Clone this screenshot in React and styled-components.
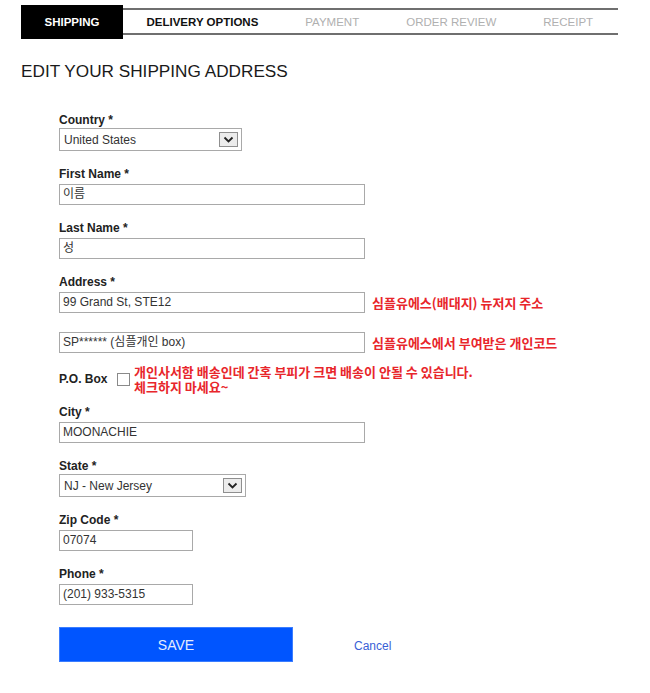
import styled, { createGlobalStyle } from 'styled-components';

const GlobalStyle = createGlobalStyle`
    body {
        margin: 0;
        background: #fff;
        font-family: "Liberation Sans", Arial, "Noto Sans CJK KR", sans-serif;
        color: #222;
    }
`;

const Page = styled.div`
    padding: 0 32px 40px 21px;
`;

const TabBar = styled.div`
    display: flex;
    width: 597px;
    height: 23px;
    margin-top: 8px;
    border-top: 2px solid #6f6f6f;
    border-bottom: 2px solid #6f6f6f;
`;

const Tab = styled.div`
    display: flex;
    align-items: center;
    justify-content: center;
    padding: 0 23.5px;
    font-size: 11.5px;
    font-weight: ${(p) => (p.$state === 'todo' ? 'normal' : 'bold')};
    color: ${(p) =>
        p.$state === 'active' ? '#fff' : p.$state === 'todo' ? '#b0b0b0' : '#111'};
    background: ${(p) => (p.$state === 'active' ? '#000' : 'transparent')};
    margin: ${(p) => (p.$state === 'active' ? '-5px 0 -6px' : '0')};
    white-space: nowrap;
`;

const Heading = styled.h1`
    margin: 26px 0 0;
    font-size: 17.2px;
    line-height: 20px;
    font-weight: normal;
    color: #1a1a1a;
`;

const Form = styled.div`
    padding: 32px 0 0 38px;
`;

const Group = styled.div`
    margin-bottom: ${(p) => (p.$gap === undefined ? 16 : p.$gap)}px;
`;

const Label = styled.div`
    font-size: 12px;
    line-height: 14px;
    font-weight: bold;
    color: #222;
    margin-bottom: 3px;
`;

const Row = styled.div`
    display: flex;
    align-items: center;
    gap: 7px;
`;

const Input = styled.div`
    box-sizing: border-box;
    width: ${(p) => p.$w}px;
    height: 21px;
    border: 1px solid #a9a9a9;
    padding: 0 3px;
    font-size: 12px;
    line-height: 19px;
    color: #333;
    font-family: "Liberation Sans", Arial, "Noto Sans CJK KR", sans-serif;
    white-space: nowrap;
`;

const Select = styled.div`
    box-sizing: border-box;
    display: flex;
    align-items: center;
    width: ${(p) => p.$w}px;
    height: 23px;
    margin-top: -2px;
    border: 1px solid #a9a9a9;
    padding: 0 3px 0 4px;
    font-size: 12px;
    color: #333;
`;

const SelectText = styled.span`
    flex: 1;
`;

const ArrowBox = styled.span`
    box-sizing: border-box;
    display: flex;
    align-items: center;
    justify-content: center;
    width: 19px;
    height: 15px;
    border: 1px solid #8f8f8f;
    background: #ececec;
`;

const Note = styled.div`
    font-family: "Noto Sans CJK KR", sans-serif;
    font-size: 13px;
    line-height: 15px;
    font-weight: bold;
    color: #e8262b;
    white-space: nowrap;
`;

const PoRow = styled.div`
    display: flex;
    align-items: center;
    margin: 0 0 11px;
`;

const PoLabel = styled.span`
    font-size: 12px;
    font-weight: bold;
    color: #222;
    width: 58px;
`;

const Checkbox = styled.span`
    box-sizing: border-box;
    width: 13px;
    height: 13px;
    border: 1px solid #8a8a8a;
    margin-right: 4px;
    background: #fff;
`;

const Actions = styled.div`
    display: flex;
    align-items: center;
    margin-top: 22px;
    gap: 61px;
`;

const SaveButton = styled.button`
    width: 234px;
    height: 35px;
    border: 1px solid #3b7dff;
    background: #0055ff;
    color: #e4ecff;
    font-family: "Liberation Sans", Arial, sans-serif;
    font-size: 14px;
`;

const CancelLink = styled.a`
    font-size: 12px;
    color: #3a5fd6;
    text-decoration: none;
    margin-top: 2px;
`;

const Chevron = () => (
    <svg width="11" height="7" viewBox="0 0 11 7">
        <path d="M1.5 1.5 L5.5 5.5 L9.5 1.5" fill="none" stroke="#222" strokeWidth="1.8" />
    </svg>
);

const tabs = [
    ['SHIPPING', 'active'],
    ['DELIVERY OPTIONS', 'next'],
    ['PAYMENT', 'todo'],
    ['ORDER REVIEW', 'todo'],
    ['RECEIPT', 'todo'],
];

const App = () => (
    <Page>
        <GlobalStyle />
        <TabBar>
            {tabs.map(([name, state]) => (
                <Tab key={name} $state={state}>
                    {name}
                </Tab>
            ))}
        </TabBar>
        <Heading>EDIT YOUR SHIPPING ADDRESS</Heading>
        <Form>
            <Group>
                <Label>Country *</Label>
                <Select $w={183}>
                    <SelectText>United States</SelectText>
                    <ArrowBox>
                        <Chevron />
                    </ArrowBox>
                </Select>
            </Group>
            <Group>
                <Label>First Name *</Label>
                <Input $w={306}>이름</Input>
            </Group>
            <Group>
                <Label>Last Name *</Label>
                <Input $w={306}>성</Input>
            </Group>
            <Group $gap={19}>
                <Label>Address *</Label>
                <Row>
                    <Input $w={306}>99 Grand St, STE12</Input>
                    <Note>심플유에스(배대지) 뉴저지 주소</Note>
                </Row>
            </Group>
            <Group $gap={11}>
                <Row>
                    <Input $w={306}>SP****** (심플개인 box)</Input>
                    <Note>심플유에스에서 부여받은 개인코드</Note>
                </Row>
            </Group>
            <PoRow>
                <PoLabel>P.O. Box</PoLabel>
                <Checkbox />
                <Note>
                    개인사서함 배송인데 간혹 부피가 크면 배송이 안될 수 있습니다.
                    <br />
                    체크하지 마세요~
                </Note>
            </PoRow>
            <Group>
                <Label>City *</Label>
                <Input $w={306}>MOONACHIE</Input>
            </Group>
            <Group>
                <Label>State *</Label>
                <Select $w={187}>
                    <SelectText>NJ - New Jersey</SelectText>
                    <ArrowBox>
                        <Chevron />
                    </ArrowBox>
                </Select>
            </Group>
            <Group>
                <Label>Zip Code *</Label>
                <Input $w={134}>07074</Input>
            </Group>
            <Group $gap={0}>
                <Label>Phone *</Label>
                <Input $w={134}>(201) 933-5315</Input>
            </Group>
            <Actions>
                <SaveButton>SAVE</SaveButton>
                <CancelLink href="#">Cancel</CancelLink>
            </Actions>
        </Form>
    </Page>
);

export default App;
